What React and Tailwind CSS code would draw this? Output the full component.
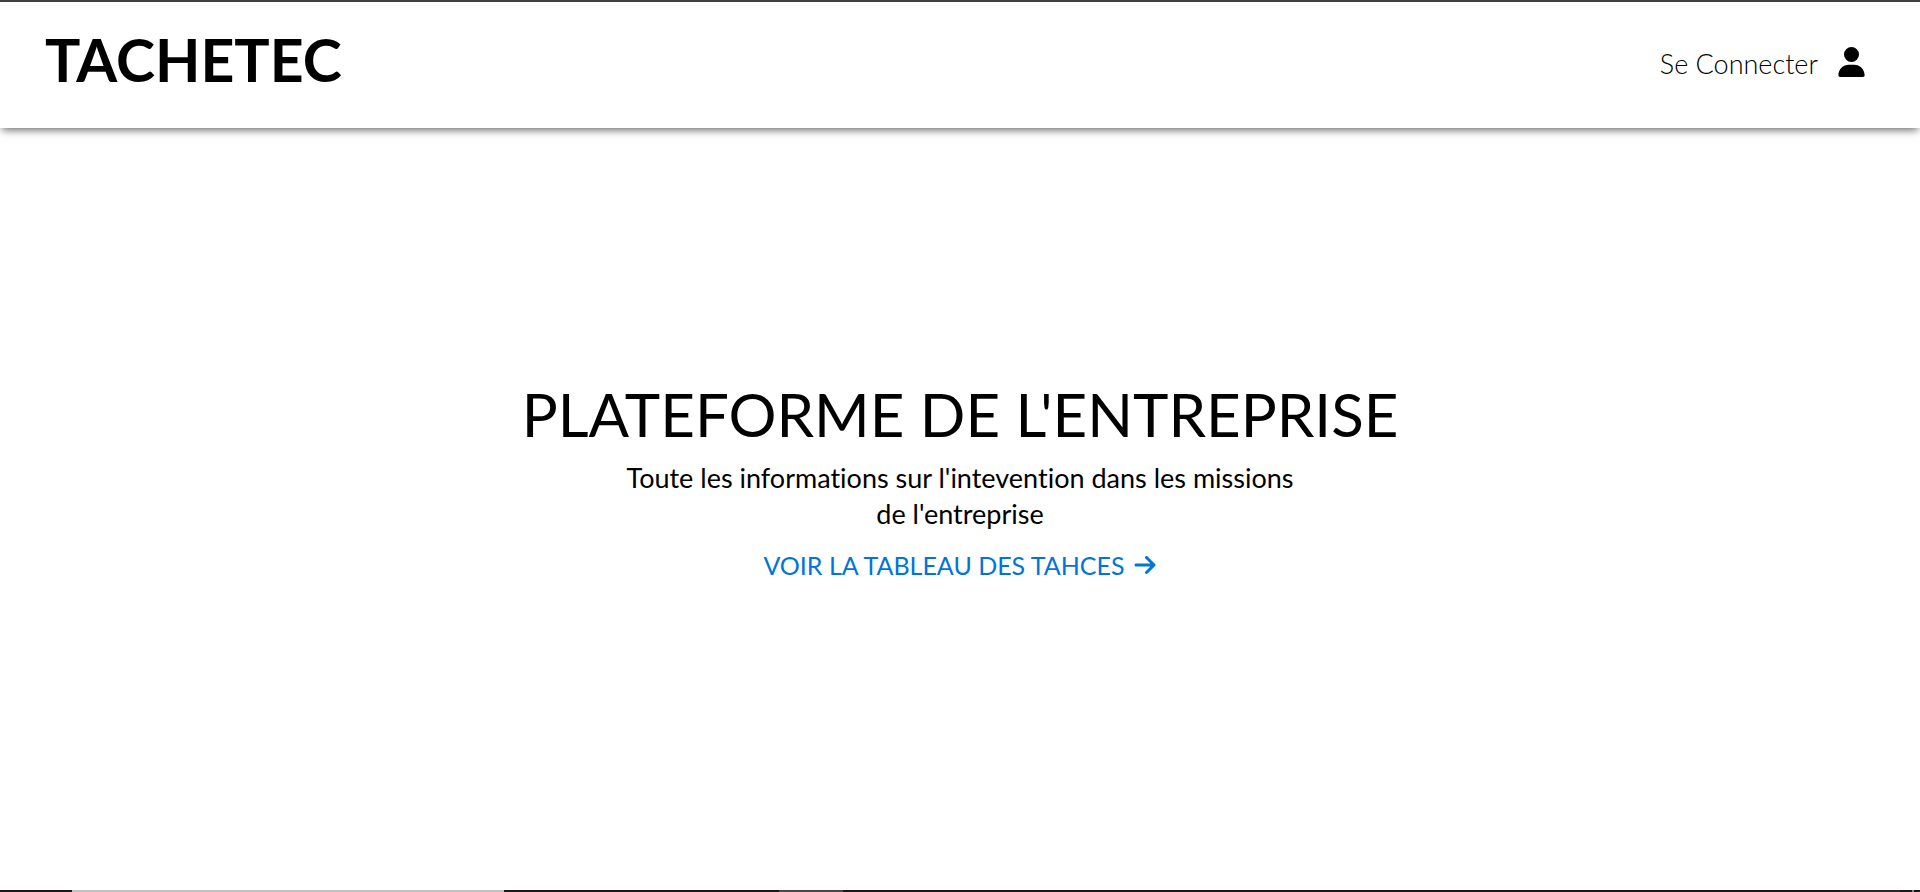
import { FaUser, FaArrowRight } from "react-icons/fa6";

export default function App() {
  return (
    <div className="flex min-h-screen flex-col bg-white font-['Lato',sans-serif] text-black [font-variant-ligatures:none]">
      <header className="flex h-32 items-center justify-between border-t-2 border-[#403e3f] pr-[55px] pl-[45px] shadow-[0_4px_8px_-2px_rgba(0,0,0,0.6)]">
        <a href="#" className="pb-[10px] text-[59px] leading-[72px] font-bold">
          TACHETEC
        </a>
        <a href="#connexion" className="flex items-center gap-5 pb-[2px] text-[27px] leading-8 font-light">
          <span>Se Connecter</span>
          <FaUser className="mb-[5px] h-[30px] w-[27px]" aria-hidden="true" />
        </a>
      </header>

      <main className="flex flex-1 flex-col items-center justify-center px-4 pb-[58px] text-center">
        <h1 className="text-[60px] leading-[72px]">PLATEFORME DE L'ENTREPRISE</h1>
        <p className="mt-[10px] max-w-[690px] text-[27px] leading-9">
          Toute les informations sur l'intevention dans les missions de l'entreprise
        </p>
        <a href="#taches" className="mt-[15px] flex items-center gap-2 text-[25px] leading-9 text-[#0074d9]">
          VOIR LA TABLEAU DES TAHCES
          <FaArrowRight className="size-6" aria-hidden="true" />
        </a>
      </main>

      <footer className="flex h-[2px] bg-[#1a1819]">
        <div className="ml-[72px] w-[432px] bg-[#c2c2c2]" />
        <div className="ml-[275px] w-16 bg-[#4a4849]" />
        <div className="mr-3 ml-auto w-[60px] bg-[#2a2829]" />
        <div className="mr-[6px] w-[2px] bg-[#808080]" />
      </footer>
    </div>
  );
}
